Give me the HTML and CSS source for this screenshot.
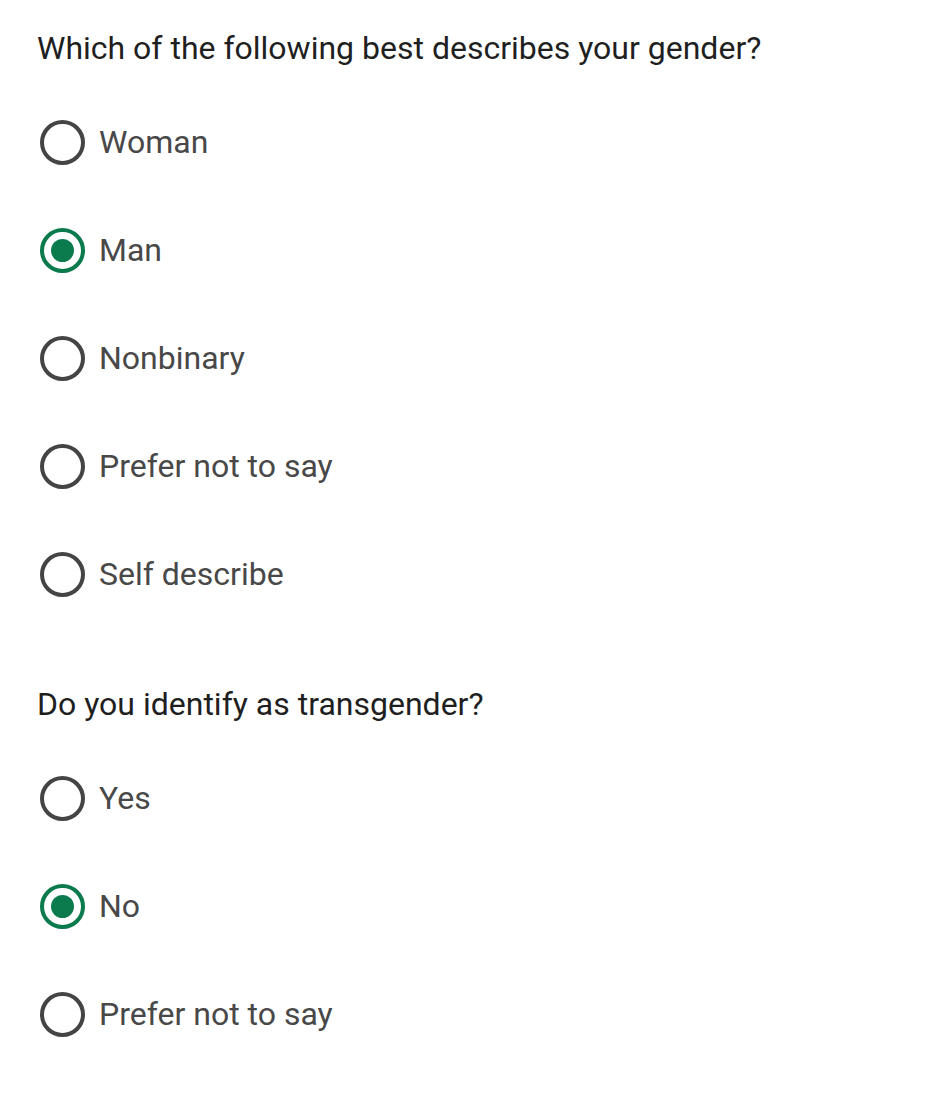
FILE: index.html
```html
<!DOCTYPE html>
<html lang="en">
<head>
<meta charset="utf-8">
<title>Survey</title>
<link rel="stylesheet" href="styles.css">
</head>
<body>
<main class="page">
  <fieldset class="question">
    <legend class="question-title">Which of the following best describes your gender?</legend>
    <div class="options">
      <label class="option"><span class="radio"></span><span class="label">Woman</span></label>
      <label class="option"><span class="radio checked"></span><span class="label">Man</span></label>
      <label class="option"><span class="radio"></span><span class="label">Nonbinary</span></label>
      <label class="option"><span class="radio"></span><span class="label">Prefer not to say</span></label>
      <label class="option"><span class="radio"></span><span class="label">Self describe</span></label>
    </div>
  </fieldset>
  <fieldset class="question second">
    <legend class="question-title">Do you identify as transgender?</legend>
    <div class="options">
      <label class="option"><span class="radio"></span><span class="label">Yes</span></label>
      <label class="option"><span class="radio checked"></span><span class="label">No</span></label>
      <label class="option"><span class="radio"></span><span class="label">Prefer not to say</span></label>
    </div>
  </fieldset>
</main>
</body>
</html>
```
FILE: styles.css
```css
html, body {
  margin: 0;
  padding: 0;
  background: #ffffff;
}
body {
  font-family: Roboto, "Liberation Sans", sans-serif;
}
.page {
  padding: 28px 0 0 37px;
}
.question {
  border: 0;
  margin: 0;
  padding: 0;
  min-width: 0;
}
.question.second {
  margin-top: 56px;
}
.question-title {
  padding: 0;
  margin: 0;
  font-size: 32px;
  line-height: 40px;
  color: #1f1f1f;
  font-weight: 400;
}
.options {
  display: flex;
  flex-direction: column;
  margin-top: 20px;
}
.option {
  height: 108px;
  display: flex;
  align-items: center;
  gap: 14px;
}
.radio {
  box-sizing: border-box;
  width: 45px;
  height: 45px;
  margin-left: 3px;
  border: 4.5px solid #444444;
  border-radius: 50%;
  display: flex;
  align-items: center;
  justify-content: center;
  flex: none;
}
.radio.checked {
  border-color: #0b7a4d;
}
.radio.checked::after {
  content: "";
  width: 23px;
  height: 23px;
  border-radius: 50%;
  background: #0b7a4d;
}
.label {
  font-size: 32px;
  line-height: 40px;
  color: #484848;
}
```
